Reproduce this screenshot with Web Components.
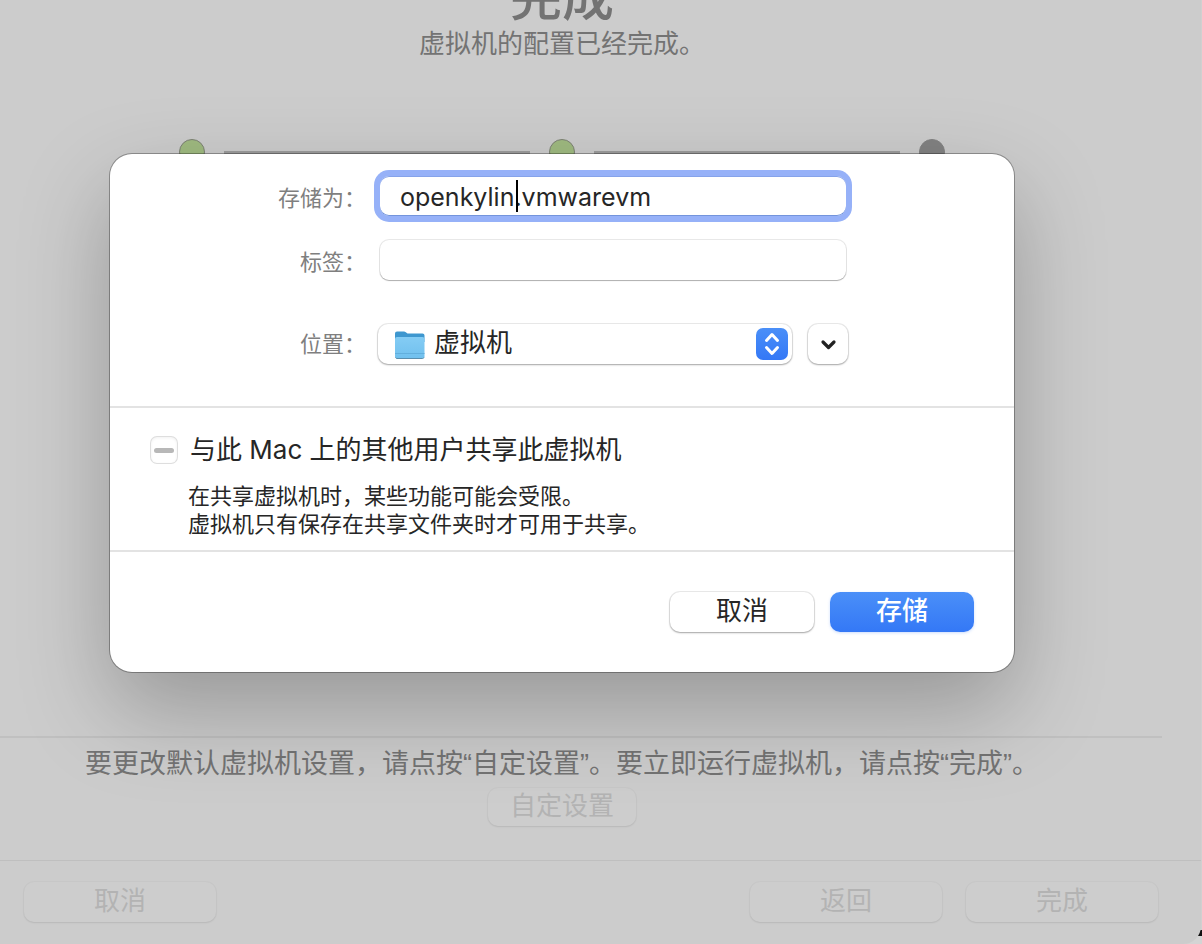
<!DOCTYPE html>
<html lang="zh-CN">
<head>
<meta charset="utf-8">
<title>虚拟机</title>
<style>
  html, body { margin: 0; height: 100%; overflow: hidden; }
  body { font-family: Inter, "Noto Sans CJK SC", sans-serif; color: #262626;
    background: linear-gradient(#d0d0d0 calc(100% - 14px), #111 calc(100% - 14px), #111 calc(100% - 8px), #d4d4d4 calc(100% - 8px)); }
</style>
</head>
<body>
<vm-window>
  <wizard-page heading="完成" subtitle="虚拟机的配置已经完成。">
    <wizard-steps slot="steps"></wizard-steps>
    <span slot="note">要更改默认虚拟机设置，请点按“自定设置”。要立即运行虚拟机，请点按“完成”。</span>
    <mac-button slot="action" variant="dim">自定设置</mac-button>
  </wizard-page>
  <mac-button slot="left" variant="dim">取消</mac-button>
  <mac-button slot="right" variant="dim">返回</mac-button>
  <mac-button slot="right" variant="dim">完成</mac-button>
  <save-sheet slot="sheet"></save-sheet>
</vm-window>

<script>
const define = (name, html) => {
  const template = document.createElement('template');
  customElements.define(name, class extends HTMLElement {
    constructor() {
      super();
      template.innerHTML = html;
      this.attachShadow({ mode: 'open' }).append(template.content.cloneNode(true));
    }
    connectedCallback() {
      this.shadowRoot.querySelectorAll('[data-from]').forEach(el => {
        el.textContent = this.getAttribute(el.dataset.from);
      });
    }
  });
};

define('vm-window', `
  <style>
    :host { display: flex; flex-direction: column; position: relative; height: 100%; box-sizing: border-box;
      margin-right: 1px; background: #cccccc; border-bottom-right-radius: 18px; --inset: 77px; }
    main { flex: 1; padding-right: var(--inset); }
    footer { display: flex; gap: 24px; border-top: 1px solid #bfbfbf; padding: 21px 43px 22px 24px; --button-width: 192px; --button-height: 40px; --button-pad: 0 0 3px; }
    .gap { flex: 1; }
    .layer { position: absolute; inset: 154px var(--inset) auto 0; display: flex; justify-content: center; }
  </style>
  <main><slot></slot></main>
  <footer><slot name="left"></slot><span class="gap"></span><slot name="right"></slot></footer>
  <div class="layer"><slot name="sheet"></slot></div>`);

define('wizard-page', `
  <style>
    :host { display: flex; flex-direction: column; align-items: center; height: 100%; color: #737373; font-size: 27px; line-height: 32px; }
    h1 { margin: -32px 0 0; font-size: 52px; line-height: 60px; font-weight: 500; }
    p { margin: 0; }
    .sub { font-size: 26px; }
    .steps { margin-top: 79px; }
    .rest { flex: 1; }
    .rule { align-self: stretch; height: 2px; background: rgba(0,0,0,.06); margin-right: -38px; }
    .note { margin-top: 10px; white-space: nowrap; font-family: "Liberation Sans", "Noto Sans CJK SC", sans-serif; }
    .action { margin: 8px 0 34px; --button-width: 148px; --button-height: 38px; --button-pad: 0 0 2px; }
  </style>
  <h1 data-from="heading"></h1>
  <p class="sub" data-from="subtitle"></p>
  <div class="steps"><slot name="steps"></slot></div>
  <div class="rest"></div>
  <div class="rule"></div>
  <p class="note"><slot name="note"></slot></p>
  <div class="action"><slot name="action"></slot></div>`);

define('wizard-steps', `
  <style>
    :host { display: flex; align-items: center; gap: 19px; }
    i { width: 26px; height: 26px; box-sizing: border-box; border-radius: 50%; background: #9fba80; border: 1px solid #7d8274; }
    i.now { background: #828282; border-color: #828282; }
    b { width: 306px; height: 3px; background: #9c9c9c; }
  </style>
  <i></i><b></b><i></i><b></b><i class="now"></i>`);

define('mac-button', `
  <style>
    :host { display: block; }
    button { display: block; width: var(--button-width, 144px); height: var(--button-height, 40px); padding: var(--button-pad, 0 0 3px);
      border: 0; border-radius: 10px; font: 26px/32px Inter, "Noto Sans CJK SC", sans-serif; color: #262626; background: #fff;
      box-shadow: 0 0 0 1px rgba(0,0,0,.08), 0 1px 2px rgba(0,0,0,.3); }
    :host([variant="dim"]) button { color: #b3b3b3; background: #cdcdcd; box-shadow: 0 0 0 1px rgba(0,0,0,.02), 0 1px 2px rgba(0,0,0,.08); }
    :host([variant="primary"]) button { color: #fff; font-weight: 500; background: linear-gradient(#4a8ff8, #3478f6); box-shadow: 0 1px 3px rgba(52,120,246,.25); }
  </style>
  <button type="button"><slot></slot></button>`);

define('folder-popup', `
  <style>
    :host { display: block; position: relative; width: 414px; height: 40px; }
    select { appearance: none; width: 100%; height: 40px; margin: 0; padding: 0 48px 2px 56px; border: 0; border-radius: 10px; background: #fff; color: #262626;
      font: 26px/36px Inter, "Noto Sans CJK SC", sans-serif; box-shadow: 0 0 0 1px rgba(0,0,0,.08), 0 1px 2px rgba(0,0,0,.3); }
    svg { position: absolute; pointer-events: none; }
    .folder { left: 16px; top: 6px; }
    .arrows { right: 4px; top: 4px; }
  </style>
  <select aria-label="位置"><option>虚拟机</option></select>
  <svg class="folder" width="31" height="30" viewBox="0 0 31 30">
    <defs><linearGradient id="f" x2="0" y2="1"><stop stop-color="#84ccf4"/><stop offset="1" stop-color="#70c0ee"/></linearGradient></defs>
    <path d="M1 3.5Q1 1.500 3 1.500H10q1 0 1.800.7L13.500 3.500H28.500q2 0 2 2V12H1z" fill="#3e97cf"/>
    <path d="M1 9Q1 7 3 7H28.500q2 0 2 2V26.500q0 2-2 2H3q-2 0-2-2z" fill="url(#f)"/>
    <path d="M1 23.500H30.500" stroke="#62afdd" stroke-width="1"/>
    <path d="M1.500 27.500q.5 1 1.500 1H28.500q1 0 1.500-1" fill="none" stroke="#5a8ead"/>
  </svg>
  <svg class="arrows" width="32" height="32" viewBox="0 0 32 32">
    <defs><linearGradient id="a" x2="0" y2="1"><stop stop-color="#4a8ff8"/><stop offset="1" stop-color="#3478f6"/></linearGradient></defs>
    <rect width="32" height="32" rx="7" fill="url(#a)"/>
    <path d="M10.500 12.500 16 6.500l5.500 6M10.500 19.500l5.500 6 5.500-6" fill="none" stroke="#fff" stroke-width="3" stroke-linecap="round" stroke-linejoin="round"/>
  </svg>`);

define('save-sheet', `
  <style>
    :host { display: block; width: 904px; background: #fff; border-radius: 22px; box-shadow: 0 0 0 1px rgba(0,0,0,.3), 0 37px 90px rgba(0,0,0,.26); }
    .fields { display: grid; grid-template-columns: 256px 1fr; column-gap: 14px; align-items: center; padding: 22px 168px 42px 0; }
    .name { text-align: right; font-size: 22px; line-height: 32px; color: #7f7f7f; }
    label.name { padding-top: 4px; }
    .box { position: relative; }
    input[type=text] { display: block; box-sizing: border-box; width: 100%; height: 40px; border: 0; border-radius: 9px; padding: 2px 20px 0; outline: 0; background: #fff; color: #262626;
      font: 25px/38px Inter, "Noto Sans CJK SC", sans-serif; box-shadow: 0 0 0 1px rgba(0,0,0,.09), 0 1px 1px rgba(0,0,0,.25); }
    .box.focus input { box-shadow: 0 0 0 6px #96b1f8, inset 0 1px 0 #86a3ea, inset 0 -1px 0 #7394dc; }
    .caret { position: absolute; left: 136px; top: 4px; width: 2px; height: 32px; background: #000; }
    .tags { margin-top: 24px; }
    .where { margin-top: 44px; }
    .row { display: flex; gap: 16px; margin-left: -2px; margin-right: -2px; }
    .more { flex: none; width: 40px; height: 40px; padding: 0; border: 0; border-radius: 10px; background: #fff; box-shadow: 0 0 0 1px rgba(0,0,0,.08), 0 1px 2px rgba(0,0,0,.3); }
    .more svg { display: block; }
    .share { border: solid #e3e3e3; border-width: 2px 0; padding: 24px 40px 12px; }
    .check { display: flex; align-items: center; gap: 13px; font-size: 26px; line-height: 36px; }
    .check input { appearance: none; flex: none; display: grid; place-items: center; width: 26px; height: 26px; margin: 0 0 0 1px; border-radius: 6px;
      box-shadow: 0 0 0 1px #dedede, inset 0 1px 3px rgba(0,0,0,.06); background: #fff; }
    .check input::after { content: ""; width: 20px; height: 5px; border-radius: 3px; background: #b8b8b8; }
    .share p { margin: 14px 0 0 38px; font-size: 22px; line-height: 28px; }
    .buttons { display: flex; justify-content: flex-end; gap: 16px; padding: 40px; }
  </style>
  <div class="fields">
    <label class="name" for="name">存储为：</label>
    <div class="box focus"><input id="name" type="text" value="openkylin.vmwarevm"><span class="caret"></span></div>
    <label class="name tags" for="tags">标签：</label>
    <div class="box tags"><input id="tags" type="text"></div>
    <span class="name where">位置：</span>
    <div class="row where"><folder-popup></folder-popup>
      <button class="more" type="button" aria-label="展开"><svg width="40" height="40" viewBox="0 0 40 40"><path d="M15 18l5.500 5.500L26 18" fill="none" stroke="#222" stroke-width="3.200" stroke-linecap="round" stroke-linejoin="round"/></svg></button></div>
  </div>
  <div class="share">
    <label class="check"><input type="checkbox" disabled>与此 Mac 上的其他用户共享此虚拟机</label>
    <p>在共享虚拟机时，某些功能可能会受限。<br>虚拟机只有保存在共享文件夹时才可用于共享。</p>
  </div>
  <div class="buttons"><mac-button>取消</mac-button><mac-button variant="primary">存储</mac-button></div>`);
</script>
</body>
</html>
